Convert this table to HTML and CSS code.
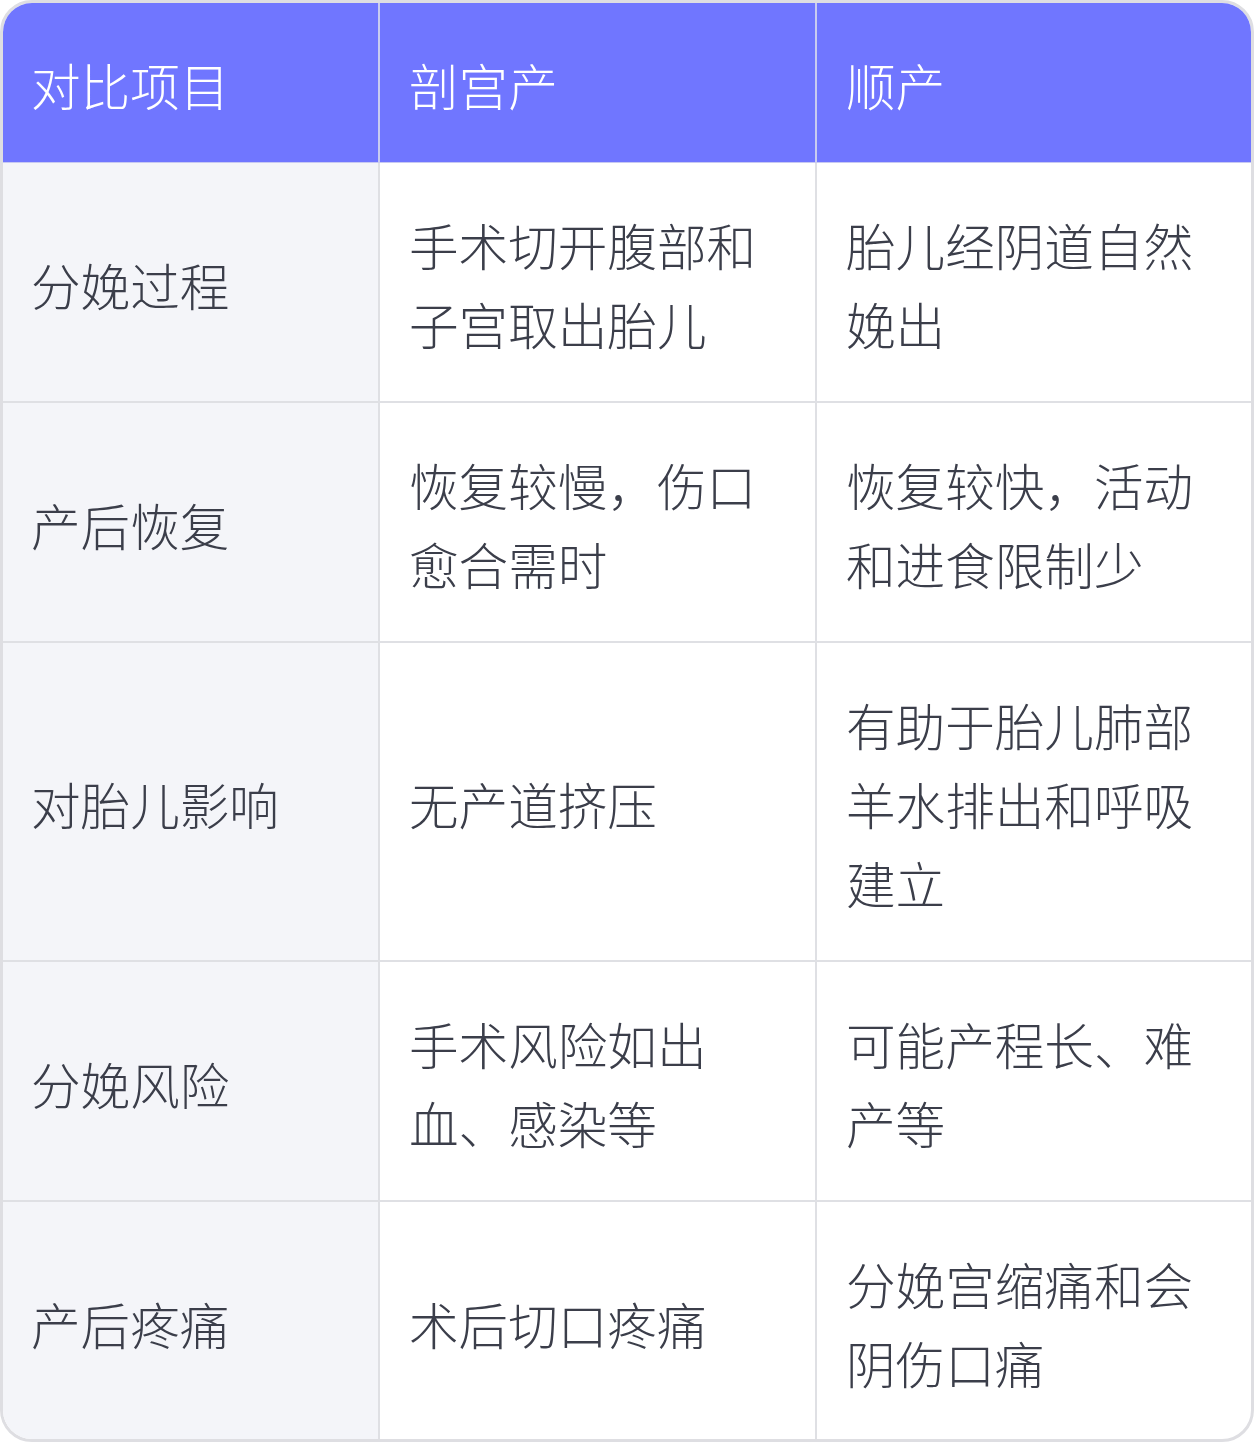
FILE: index.html
```html
<!DOCTYPE html>
<html lang="zh-CN">
<head>
<meta charset="utf-8">
<title>剖宫产与顺产对比</title>
<link rel="stylesheet" href="styles.css">
</head>
<body>
<div class="frame">
  <table class="cmp">
    <colgroup>
      <col class="c1">
      <col class="c2">
      <col class="c3">
    </colgroup>
    <thead>
      <tr><th>对比项目</th><th>剖宫产</th><th>顺产</th></tr>
    </thead>
    <tbody>
      <tr><td>分娩过程</td><td>手术切开腹部和子宫取出胎儿</td><td>胎儿经阴道自然娩出</td></tr>
      <tr><td>产后恢复</td><td>恢复较慢，伤口愈合需时</td><td>恢复较快，活动和进食限制少</td></tr>
      <tr><td>对胎儿影响</td><td>无产道挤压</td><td>有助于胎儿肺部羊水排出和呼吸建立</td></tr>
      <tr><td>分娩风险</td><td>手术风险如出血、感染等</td><td>可能产程长、难产等</td></tr>
      <tr><td>产后疼痛</td><td>术后切口疼痛</td><td>分娩宫缩痛和会阴伤口痛</td></tr>
    </tbody>
  </table>
</div>
</body>
</html>
```

FILE: styles.css
```css
html, body {
  margin: 0;
  padding: 0;
  background: #ffffff;
}
body {
  font-family: "Noto Sans CJK SC", "Noto Sans", sans-serif;
}
.frame {
  width: 1254px;
  height: 1442px;
  box-sizing: border-box;
  border: 3px solid #dedee2;
  border-radius: 32px;
  overflow: hidden;
  background: #ffffff;
}
.cmp {
  width: 100%;
  border-collapse: collapse;
  table-layout: fixed;
}
.c1 { width: 376px; }
.c2 { width: 437px; }
.c3 { width: auto; }
.cmp th,
.cmp td {
  font-size: 49.6px;
  line-height: 79px;
  font-weight: 300;
  text-align: left;
  vertical-align: middle;
  padding: 42px 28px 38px 29px;
}
.cmp th {
  background: #7076ff;
  color: #ffffff;
  border-left: 2px solid #c9cbf0;
  border-bottom: 1px solid #c7c9f2;
}
.cmp th:first-child { border-left: none; padding-left: 28px; }
.cmp td {
  color: #3b3e4a;
  border-left: 2px solid #dfe0e4;
  border-top: 2px solid #dfe0e4;
}
.cmp tbody tr:first-child td { border-top: none; }
.cmp td:first-child {
  border-left: none;
  background: #f4f5f9;
  padding-left: 28px;
}
```
